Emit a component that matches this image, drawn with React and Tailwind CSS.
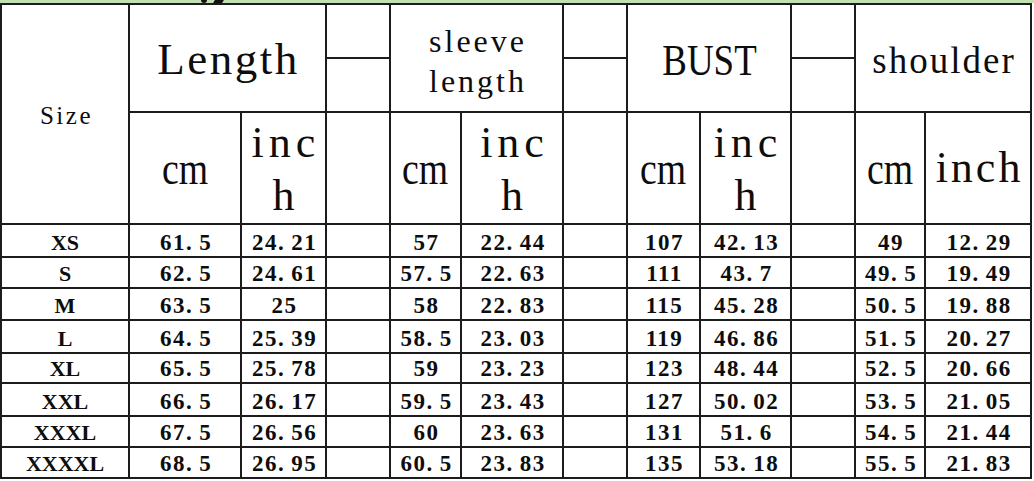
import React from "react";

const rows = [
  ["XS", "61.5", "24.21", "57", "22.44", "107", "42.13", "49", "12.29"],
  ["S", "62.5", "24.61", "57.5", "22.63", "111", "43.7", "49.5", "19.49"],
  ["M", "63.5", "25", "58", "22.83", "115", "45.28", "50.5", "19.88"],
  ["L", "64.5", "25.39", "58.5", "23.03", "119", "46.86", "51.5", "20.27"],
  ["XL", "65.5", "25.78", "59", "23.23", "123", "48.44", "52.5", "20.66"],
  ["XXL", "66.5", "26.17", "59.5", "23.43", "127", "50.02", "53.5", "21.05"],
  ["XXXL", "67.5", "26.56", "60", "23.63", "131", "51.6", "54.5", "21.44"],
  ["XXXXL", "68.5", "26.95", "60.5", "23.83", "135", "53.18", "55.5", "21.83"],
];

const rowHeights = ["h-[33px]", "h-[31px]", "h-[32px]", "h-[33px]", "h-[30px]", "h-[33px]", "h-[31px]", "h-[31px]"];

const cell = "border-2 border-[#1c1c1c] p-0 text-center";

function Num({ v }) {
  const parts = v.split(".");
  if (parts.length === 1) return <span>{v}</span>;
  return (
    <span>
      {parts[0]}
      <span className="mr-[6px]">.</span>
      {parts[1]}
    </span>
  );
}

function DataCell({ v }) {
  return (
    <td className={`${cell} align-bottom pb-[2px] pl-[2px] leading-[22px] text-[23px] font-bold tracking-[1.5px] whitespace-nowrap`}>
      <Num v={v} />
    </td>
  );
}

function Empty() {
  return <td className={cell}></td>;
}

function InchTwoLine() {
  return (
    <td className={`${cell} align-middle`}>
      <div className="text-[44px] leading-[53px] tracking-[5px] pl-[5px] pt-[2px]">
        inc
        <br />h
      </div>
    </td>
  );
}

function Cm() {
  return (
    <td className={`${cell} align-middle`}>
      <span className="inline-block text-[46px] scale-x-[0.82]">cm</span>
    </td>
  );
}

export default function App() {
  return (
    <div className="w-[1034px] h-[481px] overflow-hidden bg-white font-['Liberation_Serif',serif] text-[#0d0d0d]">
      <div className="relative h-[3px] w-full overflow-hidden bg-[#c5dfb4]">
        <div className="absolute left-[201px] top-0 h-[3px] w-[6px] rounded-b-[3px] bg-[#111]"></div>
        <div className="absolute left-[214px] top-0 h-[3px] w-[9px] -skew-x-[30deg] bg-[#111]"></div>
      </div>
      <table className="table-fixed border-collapse w-[1031px]">
        <colgroup>
          <col className="w-[128px]" />
          <col className="w-[112px]" />
          <col className="w-[85px]" />
          <col className="w-[64px]" />
          <col className="w-[71px]" />
          <col className="w-[102px]" />
          <col className="w-[64px]" />
          <col className="w-[73px]" />
          <col className="w-[91px]" />
          <col className="w-[64px]" />
          <col className="w-[70px]" />
          <col className="w-[106px]" />
        </colgroup>
        <tbody>
          <tr className="h-[54px]">
            <td rowSpan={3} className={`${cell} align-middle text-[25px] tracking-[2.5px] pl-[3px] pt-[4px]`}>
              Size
            </td>
            <td colSpan={2} rowSpan={2} className={`${cell} align-middle pt-[4px]`}>
              <span className="text-[45px] tracking-[2.5px] pl-[2px]">Length</span>
            </td>
            <Empty />
            <td colSpan={2} rowSpan={2} className={`${cell} align-middle pt-[6px]`}>
              <div className="text-[32px] leading-[40px] tracking-[3px] pl-[3px]">
                sleeve
                <br />
                length
              </div>
            </td>
            <Empty />
            <td colSpan={2} rowSpan={2} className={`${cell} align-middle pt-[5px]`}>
              <span className="inline-block text-[45px] scale-x-[0.82]">BUST</span>
            </td>
            <Empty />
            <td colSpan={2} rowSpan={2} className={`${cell} align-middle pt-[6px]`}>
              <span className="text-[37px] tracking-[2px] pl-[2px]">shoulder</span>
            </td>
          </tr>
          <tr className="h-[54px]">
            <Empty />
            <Empty />
            <Empty />
          </tr>
          <tr className="h-[112px]">
            <Cm />
            <InchTwoLine />
            <Empty />
            <Cm />
            <InchTwoLine />
            <Empty />
            <Cm />
            <InchTwoLine />
            <Empty />
            <Cm />
            <td className={`${cell} align-middle`}>
              <span className="text-[44px] tracking-[3px] pl-[3px] whitespace-nowrap">inch</span>
            </td>
          </tr>
          {rows.map((r, i) => (
            <tr key={r[0]} className={rowHeights[i]}>
              <td className={`${cell} align-bottom pb-[2px] leading-[22px] text-[22px] font-bold`}>{r[0]}</td>
              <DataCell v={r[1]} />
              <DataCell v={r[2]} />
              <Empty />
              <DataCell v={r[3]} />
              <DataCell v={r[4]} />
              <Empty />
              <DataCell v={r[5]} />
              <DataCell v={r[6]} />
              <Empty />
              <DataCell v={r[7]} />
              <DataCell v={r[8]} />
            </tr>
          ))}
        </tbody>
      </table>
    </div>
  );
}
